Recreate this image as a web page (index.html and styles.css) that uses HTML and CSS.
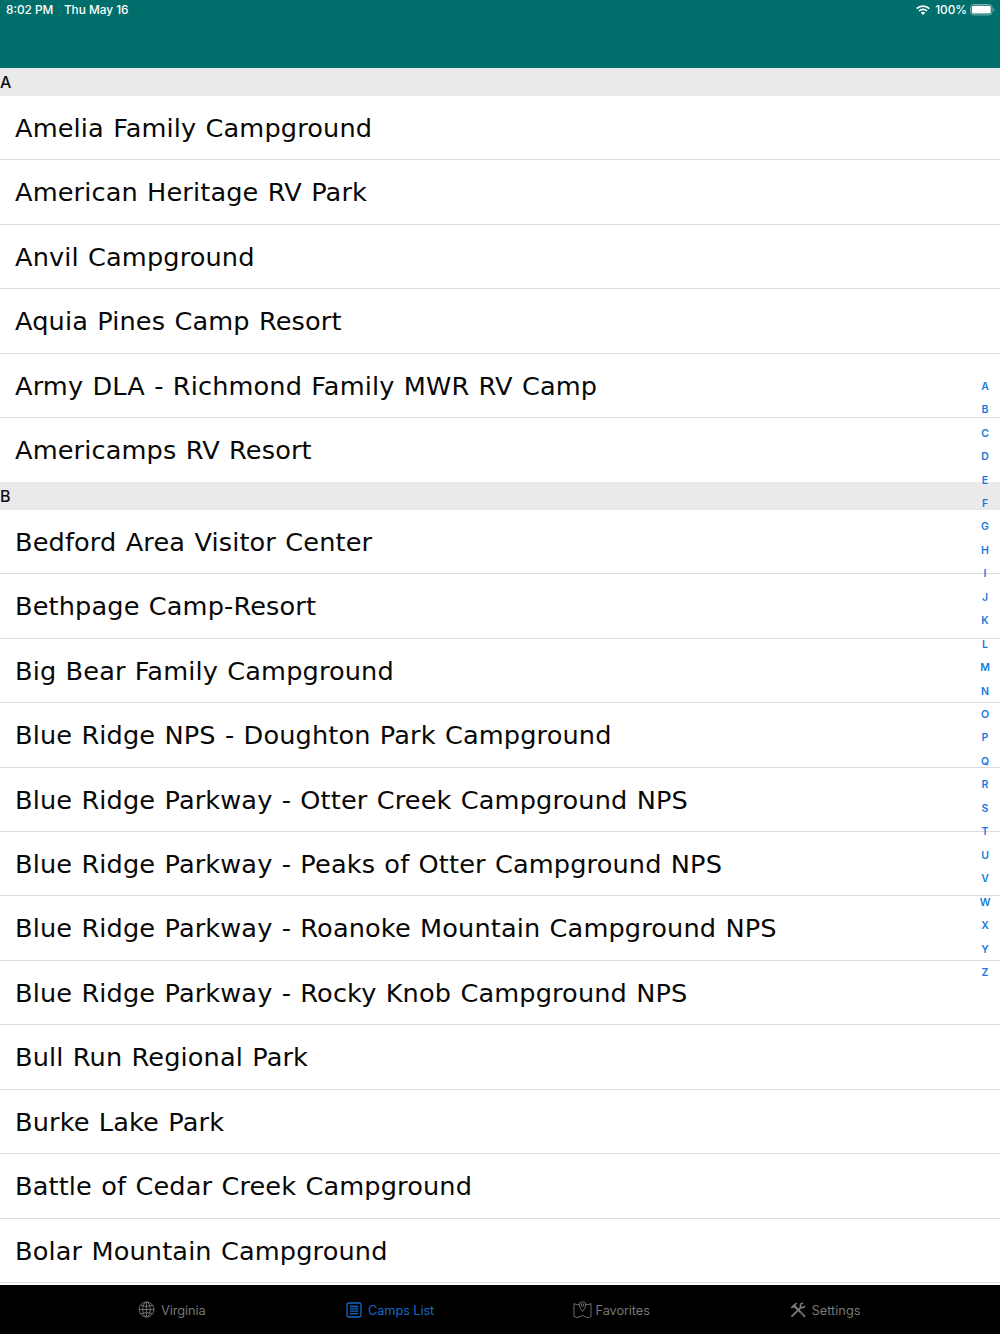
FILE: index.html
```html
<!DOCTYPE html>
<html lang="en">
<head>
<meta charset="utf-8">
<title>Camps List</title>
<link rel="stylesheet" href="styles.css">
</head>
<body>
<div class="app">
  <header class="top">
    <div class="status">
      <span class="time">8:02 PM</span><span class="date">Thu May 16</span>
      <svg class="wifi" viewBox="0 0 14 10"><g fill="none" stroke="#fff" stroke-width="1.7"><path d="M.7 3.7a9 9 0 0 1 12.6 0M3 6a5.7 5.7 0 0 1 8 0"/></g><path d="M4.8 7.7a3.2 3.2 0 0 1 4.4 0L7 9.9z" fill="#fff"/></svg>
      <span class="percent">100%</span>
      <svg class="battery" viewBox="0 0 25 12"><rect x=".5" y=".5" width="21.6" height="10.4" rx="3" fill="none" stroke="#76afad"/><rect x="1.8" y="1.8" width="19" height="7.8" rx="1.7" fill="#fff"/><path d="M23.4 4v3.6q1.2-.5 1.2-1.8t-1.2-1.8" fill="#76afad"/></svg>
    </div>
  </header>
  <main class="list">
    <h2 class="section">A</h2>
    <ul>
      <li>Amelia Family Campground</li>
      <li>American Heritage RV Park</li>
      <li>Anvil Campground</li>
      <li>Aquia Pines Camp Resort</li>
      <li>Army DLA - Richmond Family MWR RV Camp</li>
      <li>Americamps RV Resort</li>
    </ul>
    <h2 class="section">B</h2>
    <ul>
      <li>Bedford Area Visitor Center</li>
      <li>Bethpage Camp-Resort</li>
      <li>Big Bear Family Campground</li>
      <li>Blue Ridge NPS - Doughton Park Campground</li>
      <li>Blue Ridge Parkway - Otter Creek Campground NPS</li>
      <li>Blue Ridge Parkway - Peaks of Otter Campground NPS</li>
      <li>Blue Ridge Parkway - Roanoke Mountain Campground NPS</li>
      <li>Blue Ridge Parkway - Rocky Knob Campground NPS</li>
      <li>Bull Run Regional Park</li>
      <li>Burke Lake Park</li>
      <li>Battle of Cedar Creek Campground</li>
      <li>Bolar Mountain Campground</li>
    </ul>
  </main>
  <nav class="index">
    <span>A</span><span>B</span><span>C</span><span>D</span><span>E</span><span>F</span><span>G</span><span>H</span><span>I</span><span>J</span><span>K</span><span>L</span><span>M</span><span>N</span><span>O</span><span>P</span><span>Q</span><span>R</span><span>S</span><span>T</span><span>U</span><span>V</span><span>W</span><span>X</span><span>Y</span><span>Z</span>
  </nav>
  <footer class="tabs">
    <a class="tab virginia"><svg width="17" height="17" viewBox="0 0 17 17" fill="none" stroke="currentColor" stroke-width=".9"><circle cx="8.5" cy="8.5" r="7.5"/><ellipse cx="8.5" cy="8.5" rx="3.8" ry="7.5"/><path d="M8.5 1v15M1 8.5h15M2.5 4.5q6 1.8 12 0M2.5 12.5q6-1.8 12 0"/></svg><span>Virginia</span></a>
    <a class="tab camps"><svg width="16" height="16" viewBox="0 0 16 16" fill="none" stroke="currentColor" stroke-width="1.3"><rect x="1" y="1" width="14" height="14" rx="1.8"/><path d="M3.8 4.5h8.4M3.8 6.9h8.4M3.8 9.2h8.4M3.8 11.6h8.4"/></svg><span>Camps List</span></a>
    <a class="tab favorites"><svg width="19" height="18" viewBox="0 0 19 18" fill="none" stroke="currentColor" stroke-width=".9"><path d="M6.5 3 5 3.8Q3 3.8 1 2.5v12.8q2.5 2 4.8 1l3.7-1.9 3.7 1.9q2.3 1 4.8-1V2.5q-2 1.3-4 1.3L12.5 3"/><path d="M9.5 10.5Q6.2 6.2 6.2 4a3.3 3.3 0 0 1 6.6 0q0 2.2-3.3 6.5z"/><circle cx="9.5" cy="4" r="1.3"/></svg><span>Favorites</span></a>
    <a class="tab settings"><svg width="16" height="16" viewBox="0 0 16 16" fill="none" stroke="currentColor"><path d="M5.2 4.8l9 9.3" stroke-width="2.2" stroke-linecap="round"/><path d="M.6 5.8 2.3 3.5 5.2 1.2q1.4-.7 2.6-.3L5.8 2.6l.4 1.6-1.9 2-1.3-.7-1.2 1.1z" fill="currentColor" stroke="none"/><path d="M2 14.1 11.3 5" stroke-width="1.9" stroke-linecap="round"/><path d="M13.2 1.3q-2.3-.3-2.8 1.6-.4 1.8 1.1 2.6 2 .8 3.4-1.6" stroke-width="1.6"/><path d="m10 10.2 3.7 3.8" stroke="#000" stroke-width=".6"/></svg><span>Settings</span></a>
  </footer>
</div>
</body>
</html>
```
FILE: styles.css
```css
* { box-sizing: border-box; }
body { margin: 0; background: #fff; font-family: Inter, "Liberation Sans", sans-serif; }
.app { position: relative; width: 1000px; height: 1334px; display: flex; flex-direction: column; overflow: hidden; }
.top { flex: 0 0 68.4px; background: #006f6b; color: #fff; }
.status { height: 19px; padding: 0 6px 0 6px; display: flex; align-items: center; font-size: 11.8px; font-weight: 500; white-space: pre; }
.date { margin-left: 10.5px; }
.wifi { width: 14px; height: 10px; margin-left: auto; }
.percent { margin: 0 3px 0 5px; }
.battery { width: 25px; height: 12px; margin-right: -1px; }
.list { flex: 1; min-height: 0; overflow: hidden; }
.section { margin: 0; height: 27.4px; line-height: 28.8px; background: #eaeaec; color: #111; font-size: 16px; font-weight: 500; }
ul { margin: 0; padding: 0; list-style: none; }
li { height: 64.45px; padding-left: 15px; border-bottom: 1px solid #dcdcde; font: 25.6px/65px Verdana, "DejaVu Sans", sans-serif; letter-spacing: .13px; word-spacing: 1px; color: #080808; white-space: nowrap; }
li:last-child { border-bottom-color: transparent; }
ul:last-child li:last-child { border-bottom-color: #dcdcde; }
.index { position: absolute; top: 374.7px; right: 5px; width: 20px; display: flex; flex-direction: column; text-align: center; color: #177bdc; font-size: 10.5px; font-weight: 600; }
.index span { height: 23.46px; line-height: 23.46px; }
.tabs { flex: 0 0 49px; background: #000; color: #777; display: grid; grid-template-columns: 208px 226.5px 217px 1fr; padding-left: 138px; font-size: 12.8px; font-weight: 400; }
.tab { display: flex; align-items: center; gap: 6px; white-space: nowrap; }
.tab span { padding-top: 1px; }
.virginia, .camps, .favorites { letter-spacing: -.1px; }
.camps { color: #1767c4; }
.favorites { gap: 4px; }
```
